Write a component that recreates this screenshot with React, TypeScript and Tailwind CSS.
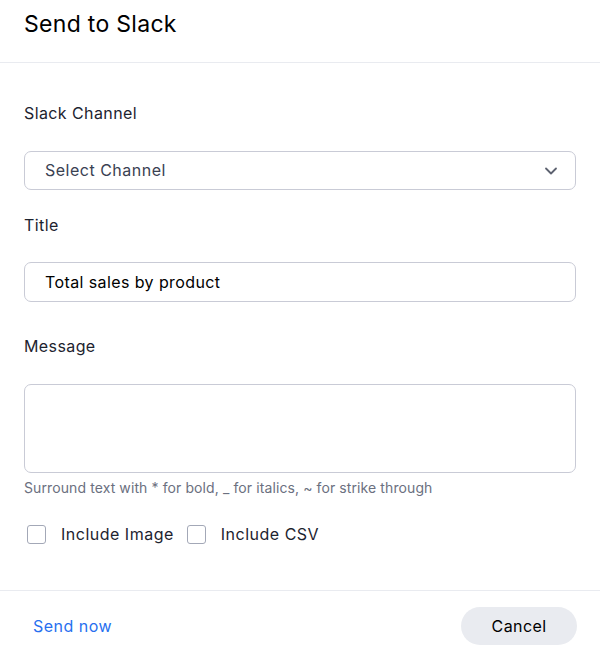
import React, { useState } from 'react';
import { ChevronDown } from 'lucide-react';

function Field({ label, children, className }: { label: string; children: React.ReactNode; className?: string }) {
  return (
    <div className={className}>
      <label className="block text-[16px] leading-6 tracking-[0.4px] text-[#1d232f]">{label}</label>
      {children}
    </div>
  );
}

function Check({ label }: { label: string }) {
  const [on, setOn] = useState(false);
  return (
    <label className="flex items-center gap-[15px] cursor-pointer">
      <span
        onClick={() => setOn(!on)}
        className={'w-[19px] h-[19px] rounded-[3px] border ' + (on ? 'bg-[#2770ef] border-[#2770ef]' : 'border-[#a3a8b7] bg-white')}
      />
      <span className="text-[16px] tracking-[0.5px] text-[#1d232f]">{label}</span>
    </label>
  );
}

export default function App() {
  const [title, setTitle] = useState('Total sales by product');
  const [message, setMessage] = useState('');

  return (
    <div className="w-[600px] h-[657px] bg-white flex flex-col font-['Inter',sans-serif] text-[#1d232f]">
      {/* Header */}
      <div className="h-[63px] border-b border-[#e9ebf0] px-6 pt-[8px]">
        <h2 className="text-[23px] leading-8 tracking-[0.3px] text-black">Send to Slack</h2>
      </div>

      {/* Body */}
      <div className="flex-1 px-6 pt-[38px]">
        <Field label="Slack Channel">
          <button className="mt-[26px] w-[552px] h-[39px] pl-5 pr-[14px] flex items-center justify-between rounded-[7px] border border-[#c9cbd6] bg-white text-[16px] tracking-[0.5px] text-[#3a4152]">
            <span className="-mt-[1px]">Select Channel</span>
            <ChevronDown className="w-5 h-5 text-[#5d6270]" strokeWidth={2.2} />
          </button>
        </Field>

        <Field label="Title" className="mt-[23px]">
          <input
            value={title}
            onChange={e => setTitle(e.target.value)}
            className="mt-[25px] w-[552px] h-[40px] px-5 rounded-[7px] border border-[#c9cbd6] text-[16px] tracking-[0.4px] text-black outline-none"
          />
        </Field>

        <Field label="Message" className="mt-[32px]">
          <textarea
            value={message}
            onChange={e => setMessage(e.target.value)}
            className="mt-[26px] block w-[552px] h-[89px] px-5 py-2 rounded-[7px] border border-[#c9cbd6] text-[16px] outline-none resize-none"
          />
        </Field>
        <p className="mt-[5px] text-[14px] leading-5 tracking-[0.1px] text-[#6b7080]">
          Surround text with * for bold, _ for italics, ~ for strike through
        </p>

        <div className="mt-[24px] ml-[3px] flex items-center gap-[13px]">
          <Check label="Include Image" />
          <Check label="Include CSV" />
        </div>
      </div>

      {/* Footer */}
      <div className="h-[67px] border-t border-[#e9ebf0] flex items-center justify-between pt-[4px] pl-[33px] pr-[23px]">
        <button className="text-[16px] tracking-[0.5px] text-[#2770ef]">Send now</button>
        <button className="w-[116px] h-[38px] rounded-full bg-[#e9ebf0] text-[16px] tracking-[0.4px] text-black">Cancel</button>
      </div>
    </div>
  );
}
